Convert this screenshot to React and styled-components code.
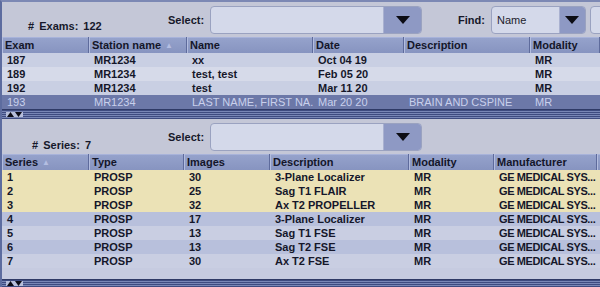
import React from "react";
import styled, { createGlobalStyle } from "styled-components";

const Global = createGlobalStyle`
  html, body { margin: 0; padding: 0; background: #c4c7d7; }
  body { font-family: "Liberation Sans", Arial, sans-serif; }
`;

const Frame = styled.div`
  width: 600px;
  height: 287px;
  overflow: hidden;
  box-sizing: border-box;
  border-left: 2px solid #5d6c9f;
  border-top: 2px solid #7c88b4;
  display: flex;
  flex-direction: column;
  background: #c4c7d7;
  font-family: "Liberation Sans", Arial, sans-serif;
  font-size: 11px;
  font-weight: bold;
  color: #16182a;
`;

const Panel = styled.section`
  display: flex;
  flex-direction: column;
  flex: ${(p) => (p.$grow ? 1 : "none")};
  min-height: 0;
`;

const Toolbar = styled.div`
  height: ${(p) => p.$h}px;
  display: flex;
  align-items: center;
  padding-left: ${(p) => p.$pl}px;
  white-space: nowrap;
  flex: none;
  overflow: hidden;
`;

const Count = styled.div`
  flex: none;
  width: ${(p) => p.$w}px;
  align-self: flex-end;
  padding-bottom: ${(p) => p.$pb}px;
  word-spacing: 2px;
`;

const Label = styled.div`
  flex: none;
  margin-left: ${(p) => p.$ml || 0}px;
  margin-right: 6px;
`;

const Combo = styled.div`
  width: ${(p) => p.$w}px;
  height: 28px;
  flex: none;
  box-sizing: border-box;
  display: flex;
  background: #d4d9ea;
  border: 1px solid #9aa2c0;
  border-radius: 4px;
  overflow: hidden;
  margin-right: 4px;
`;

const ComboText = styled.div`
  flex: 1;
  display: flex;
  align-items: center;
  padding-left: 5px;
  font-weight: normal;
  color: #1c1c2c;
`;

const ComboButton = styled.div`
  width: ${(p) => p.$w}px;
  flex: none;
  background: #8e99c4;
  border-left: 1px solid #a9b1d0;
  display: flex;
  align-items: center;
  justify-content: center;
`;

const Arrow = () => (
  <svg width="14" height="8" viewBox="0 0 14 8">
    <path d="M0 0 H14 L7 8 Z" fill="#0c0c14" />
  </svg>
);

const Grid = styled.div`
  display: grid;
  grid-template-columns: ${(p) => p.$cols};
  flex: none;
`;

const HeadCell = styled.div`
  height: ${(p) => p.$h}px;
  display: flex;
  align-items: center;
  padding-left: 3px;
  background: linear-gradient(#96a3cc, #8794c0);
  border-right: 1px solid #5e6b9c;
  box-shadow: inset 1px 0 0 #b3bddf, inset 0 1px 0 #a8b3da;
  white-space: nowrap;
  overflow: hidden;
  color: #14162a;
`;

const Sort = styled.span`
  color: #b4bee2;
  font-size: 8px;
  margin-left: 4px;
`;

const Cell = styled.div`
  height: 14px;
  line-height: 14px;
  padding-left: 5px;
  background: ${(p) => p.$bg};
  color: ${(p) => p.$fg};
  font-weight: ${(p) => (p.$sel ? "normal" : "bold")};
  letter-spacing: ${(p) => (p.$tight ? "-0.4px" : "normal")};
  white-space: nowrap;
  min-width: 0;
`;

const Filler = styled.div`
  flex: 1;
  background: #c6cbe0;
`;

const Splitter = styled.div`
  height: ${(p) => p.$h}px;
  flex: none;
  display: flex;
  align-items: center;
  background: repeating-linear-gradient(
    #3e4b80 0px,
    #3e4b80 1px,
    #7886b6 1px,
    #7886b6 2px
  );
  border-top: 1px solid #2f3a66;
`;

const Grip = styled.div`
  margin-left: 4px;
  height: 5px;
  display: flex;
  gap: 1px;
  background: #b6bedb;
  padding: 0 1px;
`;

const GripArrow = ({ up }) => (
  <svg width="7" height="5" viewBox="0 0 7 5">
    <path d={up ? "M0 5 H7 L3.5 0 Z" : "M0 0 H7 L3.5 5 Z"} fill="#0c0c18" />
  </svg>
);

const examCols = "87px 98px 126px 91px 126px 1fr";
const seriesCols = "87px 95px 86px 139px 85px 103px 1fr";

const exams = [
  ["187", "MR1234", "xx", "Oct 04 19", "", "MR"],
  ["189", "MR1234", "test, test", "Feb 05 20", "", "MR"],
  ["192", "MR1234", "test", "Mar 11 20", "", "MR"],
  ["193", "MR1234", "LAST NAME, FIRST NA...", "Mar 20 20", "BRAIN AND CSPINE", "MR"],
];

const series = [
  ["1", "PROSP", "30", "3-Plane Localizer", "MR", "GE MEDICAL SYS...", ""],
  ["2", "PROSP", "25", "Sag T1 FLAIR", "MR", "GE MEDICAL SYS...", ""],
  ["3", "PROSP", "32", "Ax T2 PROPELLER", "MR", "GE MEDICAL SYS...", ""],
  ["4", "PROSP", "17", "3-Plane Localizer", "MR", "GE MEDICAL SYS...", ""],
  ["5", "PROSP", "13", "Sag T1 FSE", "MR", "GE MEDICAL SYS...", ""],
  ["6", "PROSP", "13", "Sag T2 FSE", "MR", "GE MEDICAL SYS...", ""],
  ["7", "PROSP", "30", "Ax T2 FSE", "MR", "GE MEDICAL SYS...", ""],
];

const examBg = ["#c9cfe3", "#d6dae9", "#c9cfe3", "#6c78a8"];
const seriesBg = ["#ebe2b6", "#ebe2b6", "#ebe2b6", "#b8c0dc", "#c9cee2", "#b8c0dc", "#c9cee2"];

export default function App() {
  return (
    <>
      <Global />
      <Frame>
        <Panel>
          <Toolbar $h={35} $pl={26}>
            <Count $w={140} $pb={5}># Exams: 122</Count>
            <Label>Select:</Label>
            <Combo $w={212}>
              <ComboText />
              <ComboButton $w={37}>
                <Arrow />
              </ComboButton>
            </Combo>
            <Label $ml={32}>Find:</Label>
            <Combo $w={95}>
              <ComboText>Name</ComboText>
              <ComboButton $w={25}>
                <Arrow />
              </ComboButton>
            </Combo>
            <Combo $w={40}>
              <ComboText />
            </Combo>
          </Toolbar>
          <Grid $cols={examCols}>
            <HeadCell $h={16}>Exam</HeadCell>
            <HeadCell $h={16}>
              Station name<Sort>▲</Sort>
            </HeadCell>
            <HeadCell $h={16}>Name</HeadCell>
            <HeadCell $h={16}>Date</HeadCell>
            <HeadCell $h={16}>Description</HeadCell>
            <HeadCell $h={16}>Modality</HeadCell>
            {exams.map((row, i) =>
              row.map((c, j) => (
                <Cell
                  key={`${i}-${j}`}
                  $bg={examBg[i]}
                  $fg={i === 3 ? "#c9d0ec" : "#15172a"}
                  $sel={i === 3}
                >
                  {c}
                </Cell>
              ))
            )}
          </Grid>
        </Panel>
        <Splitter $h={9}>
          <Grip>
            <GripArrow up />
            <GripArrow />
          </Grip>
        </Splitter>
        <Panel $grow>
          <Toolbar $h={35} $pl={30}>
            <Count $w={136} $pb={3}># Series: 7</Count>
            <Label>Select:</Label>
            <Combo $w={212}>
              <ComboText />
              <ComboButton $w={37}>
                <Arrow />
              </ComboButton>
            </Combo>
          </Toolbar>
          <Grid $cols={seriesCols}>
            <HeadCell $h={16}>
              Series<Sort>▲</Sort>
            </HeadCell>
            <HeadCell $h={16}>Type</HeadCell>
            <HeadCell $h={16}>Images</HeadCell>
            <HeadCell $h={16}>Description</HeadCell>
            <HeadCell $h={16}>Modality</HeadCell>
            <HeadCell $h={16}>Manufacturer</HeadCell>
            <HeadCell $h={16} />
            {series.map((row, i) =>
              row.map((c, j) => (
                <Cell
                  key={`${i}-${j}`}
                  $bg={seriesBg[i]}
                  $fg="#15172a"
                  $tight={j === 5}
                >
                  {c}
                </Cell>
              ))
            )}
          </Grid>
          <Filler />
          <Splitter $h={7}>
            <Grip>
              <GripArrow up />
              <GripArrow />
            </Grip>
          </Splitter>
        </Panel>
      </Frame>
    </>
  );
}
